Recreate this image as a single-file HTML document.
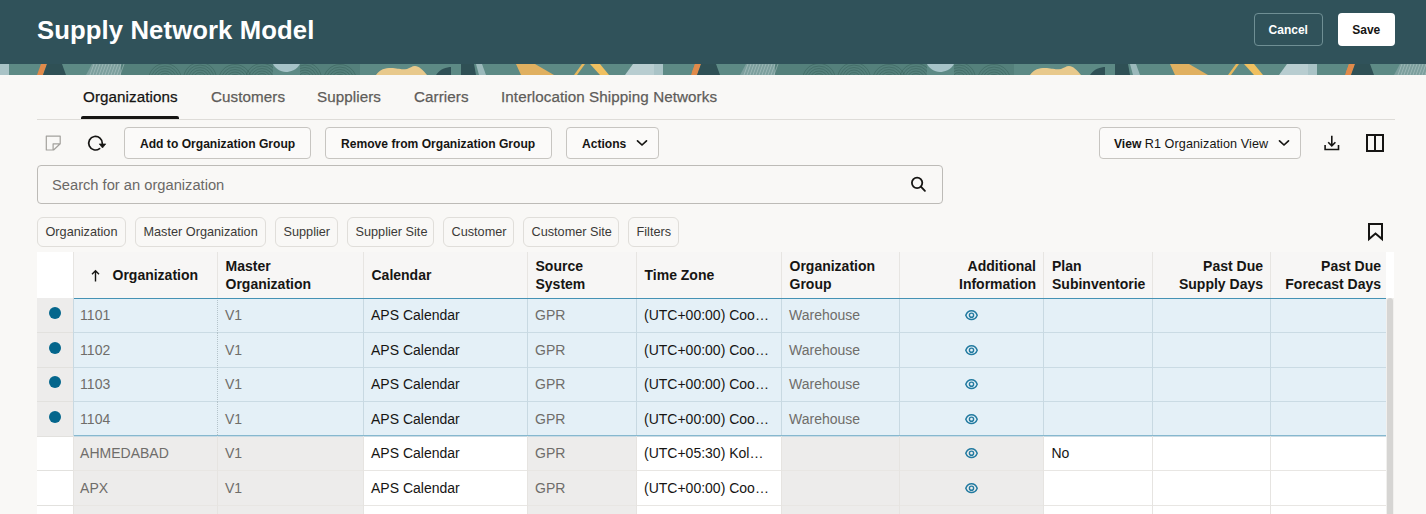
<!DOCTYPE html><html><head><meta charset="utf-8"><style>
*{box-sizing:border-box;margin:0;padding:0}
html,body{width:1426px;height:514px;overflow:hidden;background:#f9f8f6;font-family:"Liberation Sans",sans-serif;color:#161513}
.a{position:absolute;white-space:nowrap}
#hdr{position:absolute;left:0;top:0;width:1426px;height:64px;background:#30525a}
#title{left:37px;top:15.5px;letter-spacing:0.1px;font-size:25.7px;font-weight:bold;color:#fff}
.hbtn{position:absolute;top:13px;height:33px;border-radius:4px;font-size:13px;font-weight:bold;display:flex;align-items:center;justify-content:center}
#cancel{left:1253.5px;width:69.5px;font-size:12px;border:1px solid #6f8f94;color:#fff}
#save{left:1337.5px;width:57.5px;font-size:12px;background:#fff;color:#161513}
.tab{top:87.6px;font-size:15.2px;letter-spacing:0.08px;color:#5f5d5a;-webkit-text-stroke:0.25px #5f5d5a}
.btn{position:absolute;top:127px;height:32px;border:1px solid #c7c5c1;border-radius:4px;background:#fbfaf9;font-size:12.1px;font-weight:bold;white-space:nowrap;color:#161513}
.btn span{position:absolute;top:8.5px}
.chip{position:absolute;top:217px;height:30px;border:1px solid #e0deda;border-radius:6px;font-size:12.7px;white-space:nowrap;color:#3b3a37}
.chip span{position:absolute;top:7px}
.th{position:absolute;font-size:14px;font-weight:bold;line-height:18px;color:#161513;white-space:nowrap}
.td{position:absolute;font-size:14px;white-space:nowrap}
</style></head><body>
<div id="hdr"><div class="a" id="title">Supply Network Model</div><div class="hbtn" id="cancel">Cancel</div><div class="hbtn" id="save">Save</div></div>
<svg class="a" style="left:0;top:64px" width="1426" height="11" viewBox="0 0 1426 11"><defs><clipPath id="fpclip"><rect x="121" y="0" width="152" height="11"/><rect x="300" y="0" width="60" height="11"/></clipPath></defs><rect width="1426" height="11" fill="#5d8a85"/><g transform="translate(0,0)"><polygon points="0,0 12,0 9,11 0,11" fill="#a9c3c6"/><rect x="9" y="0" width="29" height="11" fill="#5d8a85"/><polygon points="41,0 47,0 43,11 37,11" fill="#e08a4a"/><polygon points="47,0 62,0 66,11 43,11" fill="#2f5055"/><rect x="66" y="0" width="20" height="11" fill="#5d8a85"/><polygon points="92,0 121,0 121,11 86,11" fill="#7c9f9d"/><rect x="121" y="0" width="152" height="11" fill="#54807b"/><path d="M273 0 H300 C297 6 290 8 286 8 C280 8 275 4 273 0 Z" fill="#a6c3c8"/><rect x="300" y="0" width="60" height="11" fill="#54807b"/><rect x="360" y="0" width="16" height="11" fill="#5d8a85"/><path d="M376 11 C380 5 385 4 391 4 C398 4 400 6 407 5 C410 4 412 2 415 2 C419 2 423 6 427 11 Z" fill="#e8c98c"/><rect x="428" y="0" width="8" height="11" fill="#5d8a85"/><path d="M436 11 C440 5 446 3 452 3 V11 Z" fill="#2f5055"/><rect x="451" y="0" width="10" height="11" fill="#5d8a85"/><polygon points="461,0 474,0 476,11 461,11" fill="#2f5055"/><polygon points="476,0 482,0 486,11 479,11" fill="#9bb9bb"/><rect x="486" y="0" width="30" height="11" fill="#5d8a85"/><polygon points="516,0 535,0 554,11 521,11" fill="#e0b060"/><rect x="554" y="0" width="21" height="11" fill="#5d8a85"/><polygon points="582,0 585,0 577,11 574,11" fill="#e8b85c"/><polygon points="590,0 600,0 609,11 600,11" fill="#f0c060"/><rect x="609" y="0" width="16" height="11" fill="#5d8a85"/><polygon points="633,0 660,0 663,11 625,11" fill="#b8cdd0"/><rect x="663" y="0" width="30" height="11" fill="#5d8a85"/><g clip-path="url(#fpclip)"><circle cx="165" cy="16" r="4" fill="none" stroke="#3b625e" stroke-width="0.8" opacity="0.7"/><circle cx="165" cy="16" r="6.5" fill="none" stroke="#3b625e" stroke-width="0.8" opacity="0.7"/><circle cx="165" cy="16" r="9" fill="none" stroke="#3b625e" stroke-width="0.8" opacity="0.7"/><circle cx="165" cy="16" r="11.5" fill="none" stroke="#3b625e" stroke-width="0.8" opacity="0.7"/><circle cx="165" cy="16" r="14" fill="none" stroke="#3b625e" stroke-width="0.8" opacity="0.7"/><circle cx="165" cy="16" r="16.5" fill="none" stroke="#3b625e" stroke-width="0.8" opacity="0.7"/><circle cx="200" cy="15" r="4" fill="none" stroke="#3b625e" stroke-width="0.8" opacity="0.7"/><circle cx="200" cy="15" r="6.5" fill="none" stroke="#3b625e" stroke-width="0.8" opacity="0.7"/><circle cx="200" cy="15" r="9" fill="none" stroke="#3b625e" stroke-width="0.8" opacity="0.7"/><circle cx="200" cy="15" r="11.5" fill="none" stroke="#3b625e" stroke-width="0.8" opacity="0.7"/><circle cx="200" cy="15" r="14" fill="none" stroke="#3b625e" stroke-width="0.8" opacity="0.7"/><circle cx="200" cy="15" r="16.5" fill="none" stroke="#3b625e" stroke-width="0.8" opacity="0.7"/><circle cx="235" cy="17" r="4" fill="none" stroke="#3b625e" stroke-width="0.8" opacity="0.7"/><circle cx="235" cy="17" r="6.5" fill="none" stroke="#3b625e" stroke-width="0.8" opacity="0.7"/><circle cx="235" cy="17" r="9" fill="none" stroke="#3b625e" stroke-width="0.8" opacity="0.7"/><circle cx="235" cy="17" r="11.5" fill="none" stroke="#3b625e" stroke-width="0.8" opacity="0.7"/><circle cx="235" cy="17" r="14" fill="none" stroke="#3b625e" stroke-width="0.8" opacity="0.7"/><circle cx="235" cy="17" r="16.5" fill="none" stroke="#3b625e" stroke-width="0.8" opacity="0.7"/><circle cx="262" cy="16" r="4" fill="none" stroke="#3b625e" stroke-width="0.8" opacity="0.7"/><circle cx="262" cy="16" r="6.5" fill="none" stroke="#3b625e" stroke-width="0.8" opacity="0.7"/><circle cx="262" cy="16" r="9" fill="none" stroke="#3b625e" stroke-width="0.8" opacity="0.7"/><circle cx="262" cy="16" r="11.5" fill="none" stroke="#3b625e" stroke-width="0.8" opacity="0.7"/><circle cx="262" cy="16" r="14" fill="none" stroke="#3b625e" stroke-width="0.8" opacity="0.7"/><circle cx="262" cy="16" r="16.5" fill="none" stroke="#3b625e" stroke-width="0.8" opacity="0.7"/><circle cx="305" cy="15" r="4" fill="none" stroke="#3b625e" stroke-width="0.8" opacity="0.7"/><circle cx="305" cy="15" r="6.5" fill="none" stroke="#3b625e" stroke-width="0.8" opacity="0.7"/><circle cx="305" cy="15" r="9" fill="none" stroke="#3b625e" stroke-width="0.8" opacity="0.7"/><circle cx="305" cy="15" r="11.5" fill="none" stroke="#3b625e" stroke-width="0.8" opacity="0.7"/><circle cx="305" cy="15" r="14" fill="none" stroke="#3b625e" stroke-width="0.8" opacity="0.7"/><circle cx="305" cy="15" r="16.5" fill="none" stroke="#3b625e" stroke-width="0.8" opacity="0.7"/><circle cx="340" cy="17" r="4" fill="none" stroke="#3b625e" stroke-width="0.8" opacity="0.7"/><circle cx="340" cy="17" r="6.5" fill="none" stroke="#3b625e" stroke-width="0.8" opacity="0.7"/><circle cx="340" cy="17" r="9" fill="none" stroke="#3b625e" stroke-width="0.8" opacity="0.7"/><circle cx="340" cy="17" r="11.5" fill="none" stroke="#3b625e" stroke-width="0.8" opacity="0.7"/><circle cx="340" cy="17" r="14" fill="none" stroke="#3b625e" stroke-width="0.8" opacity="0.7"/><circle cx="340" cy="17" r="16.5" fill="none" stroke="#3b625e" stroke-width="0.8" opacity="0.7"/></g><path d="M90 11 L94 0" stroke="#c9d8d8" stroke-width="0.7" opacity="0.6"/><path d="M93 11 L97 0" stroke="#c9d8d8" stroke-width="0.7" opacity="0.6"/><path d="M96 11 L100 0" stroke="#c9d8d8" stroke-width="0.7" opacity="0.6"/><path d="M99 11 L103 0" stroke="#c9d8d8" stroke-width="0.7" opacity="0.6"/><path d="M102 11 L106 0" stroke="#c9d8d8" stroke-width="0.7" opacity="0.6"/><path d="M105 11 L109 0" stroke="#c9d8d8" stroke-width="0.7" opacity="0.6"/><path d="M108 11 L112 0" stroke="#c9d8d8" stroke-width="0.7" opacity="0.6"/><path d="M111 11 L115 0" stroke="#c9d8d8" stroke-width="0.7" opacity="0.6"/><path d="M114 11 L118 0" stroke="#c9d8d8" stroke-width="0.7" opacity="0.6"/><path d="M117 11 L121 0" stroke="#c9d8d8" stroke-width="0.7" opacity="0.6"/><path d="M120 11 L124 0" stroke="#c9d8d8" stroke-width="0.7" opacity="0.6"/><polygon points="695,0 701,0 697,11 691,11" fill="#e08a4a"/></g><g transform="translate(654,0)"><polygon points="0,0 12,0 9,11 0,11" fill="#a9c3c6"/><rect x="9" y="0" width="29" height="11" fill="#5d8a85"/><polygon points="41,0 47,0 43,11 37,11" fill="#e08a4a"/><polygon points="47,0 62,0 66,11 43,11" fill="#2f5055"/><rect x="66" y="0" width="20" height="11" fill="#5d8a85"/><polygon points="92,0 121,0 121,11 86,11" fill="#7c9f9d"/><rect x="121" y="0" width="152" height="11" fill="#54807b"/><path d="M273 0 H300 C297 6 290 8 286 8 C280 8 275 4 273 0 Z" fill="#a6c3c8"/><rect x="300" y="0" width="60" height="11" fill="#54807b"/><rect x="360" y="0" width="16" height="11" fill="#5d8a85"/><path d="M376 11 C380 5 385 4 391 4 C398 4 400 6 407 5 C410 4 412 2 415 2 C419 2 423 6 427 11 Z" fill="#e8c98c"/><rect x="428" y="0" width="8" height="11" fill="#5d8a85"/><path d="M436 11 C440 5 446 3 452 3 V11 Z" fill="#2f5055"/><rect x="451" y="0" width="10" height="11" fill="#5d8a85"/><polygon points="461,0 474,0 476,11 461,11" fill="#2f5055"/><polygon points="476,0 482,0 486,11 479,11" fill="#9bb9bb"/><rect x="486" y="0" width="30" height="11" fill="#5d8a85"/><polygon points="516,0 535,0 554,11 521,11" fill="#e0b060"/><rect x="554" y="0" width="21" height="11" fill="#5d8a85"/><polygon points="582,0 585,0 577,11 574,11" fill="#e8b85c"/><polygon points="590,0 600,0 609,11 600,11" fill="#f0c060"/><rect x="609" y="0" width="16" height="11" fill="#5d8a85"/><polygon points="633,0 660,0 663,11 625,11" fill="#b8cdd0"/><rect x="663" y="0" width="30" height="11" fill="#5d8a85"/><g clip-path="url(#fpclip)"><circle cx="165" cy="16" r="4" fill="none" stroke="#3b625e" stroke-width="0.8" opacity="0.7"/><circle cx="165" cy="16" r="6.5" fill="none" stroke="#3b625e" stroke-width="0.8" opacity="0.7"/><circle cx="165" cy="16" r="9" fill="none" stroke="#3b625e" stroke-width="0.8" opacity="0.7"/><circle cx="165" cy="16" r="11.5" fill="none" stroke="#3b625e" stroke-width="0.8" opacity="0.7"/><circle cx="165" cy="16" r="14" fill="none" stroke="#3b625e" stroke-width="0.8" opacity="0.7"/><circle cx="165" cy="16" r="16.5" fill="none" stroke="#3b625e" stroke-width="0.8" opacity="0.7"/><circle cx="200" cy="15" r="4" fill="none" stroke="#3b625e" stroke-width="0.8" opacity="0.7"/><circle cx="200" cy="15" r="6.5" fill="none" stroke="#3b625e" stroke-width="0.8" opacity="0.7"/><circle cx="200" cy="15" r="9" fill="none" stroke="#3b625e" stroke-width="0.8" opacity="0.7"/><circle cx="200" cy="15" r="11.5" fill="none" stroke="#3b625e" stroke-width="0.8" opacity="0.7"/><circle cx="200" cy="15" r="14" fill="none" stroke="#3b625e" stroke-width="0.8" opacity="0.7"/><circle cx="200" cy="15" r="16.5" fill="none" stroke="#3b625e" stroke-width="0.8" opacity="0.7"/><circle cx="235" cy="17" r="4" fill="none" stroke="#3b625e" stroke-width="0.8" opacity="0.7"/><circle cx="235" cy="17" r="6.5" fill="none" stroke="#3b625e" stroke-width="0.8" opacity="0.7"/><circle cx="235" cy="17" r="9" fill="none" stroke="#3b625e" stroke-width="0.8" opacity="0.7"/><circle cx="235" cy="17" r="11.5" fill="none" stroke="#3b625e" stroke-width="0.8" opacity="0.7"/><circle cx="235" cy="17" r="14" fill="none" stroke="#3b625e" stroke-width="0.8" opacity="0.7"/><circle cx="235" cy="17" r="16.5" fill="none" stroke="#3b625e" stroke-width="0.8" opacity="0.7"/><circle cx="262" cy="16" r="4" fill="none" stroke="#3b625e" stroke-width="0.8" opacity="0.7"/><circle cx="262" cy="16" r="6.5" fill="none" stroke="#3b625e" stroke-width="0.8" opacity="0.7"/><circle cx="262" cy="16" r="9" fill="none" stroke="#3b625e" stroke-width="0.8" opacity="0.7"/><circle cx="262" cy="16" r="11.5" fill="none" stroke="#3b625e" stroke-width="0.8" opacity="0.7"/><circle cx="262" cy="16" r="14" fill="none" stroke="#3b625e" stroke-width="0.8" opacity="0.7"/><circle cx="262" cy="16" r="16.5" fill="none" stroke="#3b625e" stroke-width="0.8" opacity="0.7"/><circle cx="305" cy="15" r="4" fill="none" stroke="#3b625e" stroke-width="0.8" opacity="0.7"/><circle cx="305" cy="15" r="6.5" fill="none" stroke="#3b625e" stroke-width="0.8" opacity="0.7"/><circle cx="305" cy="15" r="9" fill="none" stroke="#3b625e" stroke-width="0.8" opacity="0.7"/><circle cx="305" cy="15" r="11.5" fill="none" stroke="#3b625e" stroke-width="0.8" opacity="0.7"/><circle cx="305" cy="15" r="14" fill="none" stroke="#3b625e" stroke-width="0.8" opacity="0.7"/><circle cx="305" cy="15" r="16.5" fill="none" stroke="#3b625e" stroke-width="0.8" opacity="0.7"/><circle cx="340" cy="17" r="4" fill="none" stroke="#3b625e" stroke-width="0.8" opacity="0.7"/><circle cx="340" cy="17" r="6.5" fill="none" stroke="#3b625e" stroke-width="0.8" opacity="0.7"/><circle cx="340" cy="17" r="9" fill="none" stroke="#3b625e" stroke-width="0.8" opacity="0.7"/><circle cx="340" cy="17" r="11.5" fill="none" stroke="#3b625e" stroke-width="0.8" opacity="0.7"/><circle cx="340" cy="17" r="14" fill="none" stroke="#3b625e" stroke-width="0.8" opacity="0.7"/><circle cx="340" cy="17" r="16.5" fill="none" stroke="#3b625e" stroke-width="0.8" opacity="0.7"/></g><path d="M90 11 L94 0" stroke="#c9d8d8" stroke-width="0.7" opacity="0.6"/><path d="M93 11 L97 0" stroke="#c9d8d8" stroke-width="0.7" opacity="0.6"/><path d="M96 11 L100 0" stroke="#c9d8d8" stroke-width="0.7" opacity="0.6"/><path d="M99 11 L103 0" stroke="#c9d8d8" stroke-width="0.7" opacity="0.6"/><path d="M102 11 L106 0" stroke="#c9d8d8" stroke-width="0.7" opacity="0.6"/><path d="M105 11 L109 0" stroke="#c9d8d8" stroke-width="0.7" opacity="0.6"/><path d="M108 11 L112 0" stroke="#c9d8d8" stroke-width="0.7" opacity="0.6"/><path d="M111 11 L115 0" stroke="#c9d8d8" stroke-width="0.7" opacity="0.6"/><path d="M114 11 L118 0" stroke="#c9d8d8" stroke-width="0.7" opacity="0.6"/><path d="M117 11 L121 0" stroke="#c9d8d8" stroke-width="0.7" opacity="0.6"/><path d="M120 11 L124 0" stroke="#c9d8d8" stroke-width="0.7" opacity="0.6"/><polygon points="695,0 701,0 697,11 691,11" fill="#e08a4a"/></g><g transform="translate(1308,0)"><polygon points="0,0 12,0 9,11 0,11" fill="#a9c3c6"/><rect x="9" y="0" width="29" height="11" fill="#5d8a85"/><polygon points="41,0 47,0 43,11 37,11" fill="#e08a4a"/><polygon points="47,0 62,0 66,11 43,11" fill="#2f5055"/><rect x="66" y="0" width="20" height="11" fill="#5d8a85"/><polygon points="92,0 121,0 121,11 86,11" fill="#7c9f9d"/><rect x="121" y="0" width="152" height="11" fill="#54807b"/><path d="M273 0 H300 C297 6 290 8 286 8 C280 8 275 4 273 0 Z" fill="#a6c3c8"/><rect x="300" y="0" width="60" height="11" fill="#54807b"/><rect x="360" y="0" width="16" height="11" fill="#5d8a85"/><path d="M376 11 C380 5 385 4 391 4 C398 4 400 6 407 5 C410 4 412 2 415 2 C419 2 423 6 427 11 Z" fill="#e8c98c"/><rect x="428" y="0" width="8" height="11" fill="#5d8a85"/><path d="M436 11 C440 5 446 3 452 3 V11 Z" fill="#2f5055"/><rect x="451" y="0" width="10" height="11" fill="#5d8a85"/><polygon points="461,0 474,0 476,11 461,11" fill="#2f5055"/><polygon points="476,0 482,0 486,11 479,11" fill="#9bb9bb"/><rect x="486" y="0" width="30" height="11" fill="#5d8a85"/><polygon points="516,0 535,0 554,11 521,11" fill="#e0b060"/><rect x="554" y="0" width="21" height="11" fill="#5d8a85"/><polygon points="582,0 585,0 577,11 574,11" fill="#e8b85c"/><polygon points="590,0 600,0 609,11 600,11" fill="#f0c060"/><rect x="609" y="0" width="16" height="11" fill="#5d8a85"/><polygon points="633,0 660,0 663,11 625,11" fill="#b8cdd0"/><rect x="663" y="0" width="30" height="11" fill="#5d8a85"/><g clip-path="url(#fpclip)"><circle cx="165" cy="16" r="4" fill="none" stroke="#3b625e" stroke-width="0.8" opacity="0.7"/><circle cx="165" cy="16" r="6.5" fill="none" stroke="#3b625e" stroke-width="0.8" opacity="0.7"/><circle cx="165" cy="16" r="9" fill="none" stroke="#3b625e" stroke-width="0.8" opacity="0.7"/><circle cx="165" cy="16" r="11.5" fill="none" stroke="#3b625e" stroke-width="0.8" opacity="0.7"/><circle cx="165" cy="16" r="14" fill="none" stroke="#3b625e" stroke-width="0.8" opacity="0.7"/><circle cx="165" cy="16" r="16.5" fill="none" stroke="#3b625e" stroke-width="0.8" opacity="0.7"/><circle cx="200" cy="15" r="4" fill="none" stroke="#3b625e" stroke-width="0.8" opacity="0.7"/><circle cx="200" cy="15" r="6.5" fill="none" stroke="#3b625e" stroke-width="0.8" opacity="0.7"/><circle cx="200" cy="15" r="9" fill="none" stroke="#3b625e" stroke-width="0.8" opacity="0.7"/><circle cx="200" cy="15" r="11.5" fill="none" stroke="#3b625e" stroke-width="0.8" opacity="0.7"/><circle cx="200" cy="15" r="14" fill="none" stroke="#3b625e" stroke-width="0.8" opacity="0.7"/><circle cx="200" cy="15" r="16.5" fill="none" stroke="#3b625e" stroke-width="0.8" opacity="0.7"/><circle cx="235" cy="17" r="4" fill="none" stroke="#3b625e" stroke-width="0.8" opacity="0.7"/><circle cx="235" cy="17" r="6.5" fill="none" stroke="#3b625e" stroke-width="0.8" opacity="0.7"/><circle cx="235" cy="17" r="9" fill="none" stroke="#3b625e" stroke-width="0.8" opacity="0.7"/><circle cx="235" cy="17" r="11.5" fill="none" stroke="#3b625e" stroke-width="0.8" opacity="0.7"/><circle cx="235" cy="17" r="14" fill="none" stroke="#3b625e" stroke-width="0.8" opacity="0.7"/><circle cx="235" cy="17" r="16.5" fill="none" stroke="#3b625e" stroke-width="0.8" opacity="0.7"/><circle cx="262" cy="16" r="4" fill="none" stroke="#3b625e" stroke-width="0.8" opacity="0.7"/><circle cx="262" cy="16" r="6.5" fill="none" stroke="#3b625e" stroke-width="0.8" opacity="0.7"/><circle cx="262" cy="16" r="9" fill="none" stroke="#3b625e" stroke-width="0.8" opacity="0.7"/><circle cx="262" cy="16" r="11.5" fill="none" stroke="#3b625e" stroke-width="0.8" opacity="0.7"/><circle cx="262" cy="16" r="14" fill="none" stroke="#3b625e" stroke-width="0.8" opacity="0.7"/><circle cx="262" cy="16" r="16.5" fill="none" stroke="#3b625e" stroke-width="0.8" opacity="0.7"/><circle cx="305" cy="15" r="4" fill="none" stroke="#3b625e" stroke-width="0.8" opacity="0.7"/><circle cx="305" cy="15" r="6.5" fill="none" stroke="#3b625e" stroke-width="0.8" opacity="0.7"/><circle cx="305" cy="15" r="9" fill="none" stroke="#3b625e" stroke-width="0.8" opacity="0.7"/><circle cx="305" cy="15" r="11.5" fill="none" stroke="#3b625e" stroke-width="0.8" opacity="0.7"/><circle cx="305" cy="15" r="14" fill="none" stroke="#3b625e" stroke-width="0.8" opacity="0.7"/><circle cx="305" cy="15" r="16.5" fill="none" stroke="#3b625e" stroke-width="0.8" opacity="0.7"/><circle cx="340" cy="17" r="4" fill="none" stroke="#3b625e" stroke-width="0.8" opacity="0.7"/><circle cx="340" cy="17" r="6.5" fill="none" stroke="#3b625e" stroke-width="0.8" opacity="0.7"/><circle cx="340" cy="17" r="9" fill="none" stroke="#3b625e" stroke-width="0.8" opacity="0.7"/><circle cx="340" cy="17" r="11.5" fill="none" stroke="#3b625e" stroke-width="0.8" opacity="0.7"/><circle cx="340" cy="17" r="14" fill="none" stroke="#3b625e" stroke-width="0.8" opacity="0.7"/><circle cx="340" cy="17" r="16.5" fill="none" stroke="#3b625e" stroke-width="0.8" opacity="0.7"/></g><path d="M90 11 L94 0" stroke="#c9d8d8" stroke-width="0.7" opacity="0.6"/><path d="M93 11 L97 0" stroke="#c9d8d8" stroke-width="0.7" opacity="0.6"/><path d="M96 11 L100 0" stroke="#c9d8d8" stroke-width="0.7" opacity="0.6"/><path d="M99 11 L103 0" stroke="#c9d8d8" stroke-width="0.7" opacity="0.6"/><path d="M102 11 L106 0" stroke="#c9d8d8" stroke-width="0.7" opacity="0.6"/><path d="M105 11 L109 0" stroke="#c9d8d8" stroke-width="0.7" opacity="0.6"/><path d="M108 11 L112 0" stroke="#c9d8d8" stroke-width="0.7" opacity="0.6"/><path d="M111 11 L115 0" stroke="#c9d8d8" stroke-width="0.7" opacity="0.6"/><path d="M114 11 L118 0" stroke="#c9d8d8" stroke-width="0.7" opacity="0.6"/><path d="M117 11 L121 0" stroke="#c9d8d8" stroke-width="0.7" opacity="0.6"/><path d="M120 11 L124 0" stroke="#c9d8d8" stroke-width="0.7" opacity="0.6"/><polygon points="695,0 701,0 697,11 691,11" fill="#e08a4a"/></g></svg>
<div class="a tab" style="left:83px;color:#161513;-webkit-text-stroke:0.25px #161513">Organizations</div>
<div class="a tab" style="left:211px">Customers</div>
<div class="a tab" style="left:317px">Suppliers</div>
<div class="a tab" style="left:414px">Carriers</div>
<div class="a tab" style="left:501px">Interlocation Shipping Networks</div>
<div class="a" style="left:37px;top:119px;width:1358px;height:1px;background:#dedcd8"></div>
<div class="a" style="left:81px;top:116px;width:98px;height:3px;background:#161513;border-radius:2px 2px 0 0"></div>
<svg class="a" style="left:44px;top:134px" width="19" height="18" viewBox="0 0 19 18"><path d="M2.3 2.1 H16.2 V9.8 L9.6 16 H2.3 Z M16.2 9.8 H9.1 V16" fill="none" stroke="#a3a19d" stroke-width="1.2" stroke-linejoin="round"/></svg>
<svg class="a" style="left:86px;top:134px" width="21" height="18" viewBox="0 0 21 18"><path d="M16.3 9.5 A6.8 6.8 0 1 0 13.6 14.6" fill="none" stroke="#161513" stroke-width="1.7" stroke-linecap="round"/><path d="M13.2 9.9 H19.8 L16.5 14 Z" fill="#161513" stroke="#161513" stroke-width="0.6" stroke-linejoin="round"/></svg>
<div class="btn" style="left:124px;width:187px"><span style="left:15px">Add to Organization Group</span></div>
<div class="btn" style="left:325px;width:227px"><span style="left:15px">Remove from Organization Group</span></div>
<div class="btn" style="left:566px;width:93px"><span style="left:15px">Actions</span></div>
<svg class="a" style="left:636px;top:139px" width="12" height="8" viewBox="0 0 12 8"><path d="M1.5 1.8 L6 6 L10.5 1.8" fill="none" stroke="#161513" stroke-width="1.7" stroke-linecap="round" stroke-linejoin="round"/></svg>
<div class="btn" style="left:1099px;width:202px"><span style="left:14px">View <span style="position:static;font-weight:normal;font-size:12.6px;letter-spacing:0.1px">R1 Organization View</span></span></div>
<svg class="a" style="left:1278px;top:139px" width="12" height="8" viewBox="0 0 12 8"><path d="M1.5 1.8 L6 6 L10.5 1.8" fill="none" stroke="#161513" stroke-width="1.7" stroke-linecap="round" stroke-linejoin="round"/></svg>
<svg class="a" style="left:1322px;top:134px" width="19" height="18" viewBox="0 0 19 18"><path d="M9.8 1.8 V11.6 M6.2 8.2 L9.8 11.8 L13.4 8.2 M3.1 11 V15.5 H16.5 V11" fill="none" stroke="#161513" stroke-width="1.6"/></svg>
<svg class="a" style="left:1366px;top:134px" width="18" height="18" viewBox="0 0 18 18"><rect x="1" y="1" width="16" height="16" fill="none" stroke="#161513" stroke-width="2"/><path d="M9 1 V17" stroke="#161513" stroke-width="2"/></svg>
<div class="a" style="left:37px;top:165px;width:906px;height:39px;border:1px solid #bdbbb7;border-radius:4px"></div>
<div class="a" style="left:52px;top:177px;font-size:14.7px;color:#6b6966">Search for an organization</div>
<svg class="a" style="left:909px;top:175px" width="19" height="19" viewBox="0 0 19 19"><circle cx="8.1" cy="7.85" r="5.2" fill="none" stroke="#161513" stroke-width="1.8"/><path d="M11.9 11.7 L15.9 15.8" stroke="#161513" stroke-width="1.9" stroke-linecap="round"/></svg>
<div class="chip" style="left:37px;width:89px"><span style="left:7.5px">Organization</span></div>
<div class="chip" style="left:135px;width:131px"><span style="left:7.5px">Master Organization</span></div>
<div class="chip" style="left:275px;width:63px"><span style="left:7.5px">Supplier</span></div>
<div class="chip" style="left:347px;width:87px"><span style="left:7.5px">Supplier Site</span></div>
<div class="chip" style="left:443px;width:71px"><span style="left:7.5px">Customer</span></div>
<div class="chip" style="left:523px;width:96px"><span style="left:7.5px">Customer Site</span></div>
<div class="chip" style="left:628px;width:51px"><span style="left:7.5px">Filters</span></div>
<svg class="a" style="left:1366px;top:221px" width="19" height="21" viewBox="0 0 19 21"><path d="M3 3 H16 V18 L9.5 12.5 L3 18 Z" fill="none" stroke="#161513" stroke-width="2" stroke-linejoin="miter"/></svg>
<div class="a" style="left:37px;top:252px;width:36.5px;height:46px;background:#fff"></div>
<div class="a" style="left:73.5px;top:252px;width:1312.0px;height:46px;background:#f7f6f5"></div>
<div class="a" style="left:1385.5px;top:252px;width:8.5px;height:46px;background:#fff"></div>
<div class="a" style="left:1385.5px;top:298px;width:8.5px;height:216px;background:#f1f0ee"></div>
<div class="a" style="left:1387px;top:298px;width:6px;height:216px;background:#d6d5d3;border-radius:3px 3px 0 0"></div>
<div class="a" style="left:73.0px;top:252px;width:1px;height:46px;background:#e7e5e2"></div>
<div class="a" style="left:216.5px;top:252px;width:1px;height:46px;background:#e7e5e2"></div>
<div class="a" style="left:362.5px;top:252px;width:1px;height:46px;background:#e7e5e2"></div>
<div class="a" style="left:526.5px;top:252px;width:1px;height:46px;background:#e7e5e2"></div>
<div class="a" style="left:635.5px;top:252px;width:1px;height:46px;background:#e7e5e2"></div>
<div class="a" style="left:780.5px;top:252px;width:1px;height:46px;background:#e7e5e2"></div>
<div class="a" style="left:899.0px;top:252px;width:1px;height:46px;background:#e7e5e2"></div>
<div class="a" style="left:1043.0px;top:252px;width:1px;height:46px;background:#e7e5e2"></div>
<div class="a" style="left:1152.0px;top:252px;width:1px;height:46px;background:#e7e5e2"></div>
<div class="a" style="left:1270.0px;top:252px;width:1px;height:46px;background:#e7e5e2"></div>
<div class="th" style="left:112.5px;top:265.6px">Organization</div>
<div class="th" style="left:225.5px;top:256.8px">Master<br>Organization</div>
<div class="th" style="left:371.5px;top:265.6px">Calendar</div>
<div class="th" style="left:535.5px;top:256.8px">Source<br>System</div>
<div class="th" style="left:644.5px;top:265.6px">Time Zone</div>
<div class="th" style="left:789.5px;top:256.8px">Organization<br>Group</div>
<div class="th" style="right:390.0px;top:256.8px;text-align:right">Additional<br>Information</div>
<div class="th" style="left:1052.0px;top:256.8px">Plan<br>Subinventorie</div>
<div class="th" style="right:163.0px;top:256.8px;text-align:right">Past Due<br>Supply Days</div>
<div class="th" style="right:45.0px;top:256.8px;text-align:right">Past Due<br>Forecast Days</div>
<svg class="a" style="left:90px;top:269px" width="11" height="13" viewBox="0 0 11 13"><path d="M5.5 12.5 V1.8 M2 5.3 L5.5 1.8 L9 5.3" fill="none" stroke="#161513" stroke-width="1.4"/></svg>
<div class="a" style="left:37px;top:298.0px;width:36.5px;height:34.5px;background:#edeceb"></div>
<div class="a" style="left:73.5px;top:298.0px;width:1312.0px;height:34.5px;background:#e4f0f7"></div>
<div class="a" style="left:37px;top:332.5px;width:36.5px;height:34.5px;background:#edeceb"></div>
<div class="a" style="left:73.5px;top:332.5px;width:1312.0px;height:34.5px;background:#e4f0f7"></div>
<div class="a" style="left:37px;top:367.0px;width:36.5px;height:34.5px;background:#edeceb"></div>
<div class="a" style="left:73.5px;top:367.0px;width:1312.0px;height:34.5px;background:#e4f0f7"></div>
<div class="a" style="left:37px;top:401.5px;width:36.5px;height:34.5px;background:#edeceb"></div>
<div class="a" style="left:73.5px;top:401.5px;width:1312.0px;height:34.5px;background:#e4f0f7"></div>
<div class="a" style="left:37px;top:436.0px;width:1348.5px;height:34.5px;background:#fff"></div>
<div class="a" style="left:73.5px;top:436.0px;width:143.5px;height:34.5px;background:#edeceb"></div>
<div class="a" style="left:217px;top:436.0px;width:146px;height:34.5px;background:#edeceb"></div>
<div class="a" style="left:527px;top:436.0px;width:109px;height:34.5px;background:#edeceb"></div>
<div class="a" style="left:781px;top:436.0px;width:118.5px;height:34.5px;background:#edeceb"></div>
<div class="a" style="left:899.5px;top:436.0px;width:144.0px;height:34.5px;background:#edeceb"></div>
<div class="a" style="left:37px;top:470.5px;width:1348.5px;height:34.5px;background:#fff"></div>
<div class="a" style="left:73.5px;top:470.5px;width:143.5px;height:34.5px;background:#edeceb"></div>
<div class="a" style="left:217px;top:470.5px;width:146px;height:34.5px;background:#edeceb"></div>
<div class="a" style="left:527px;top:470.5px;width:109px;height:34.5px;background:#edeceb"></div>
<div class="a" style="left:781px;top:470.5px;width:118.5px;height:34.5px;background:#edeceb"></div>
<div class="a" style="left:899.5px;top:470.5px;width:144.0px;height:34.5px;background:#edeceb"></div>
<div class="a" style="left:37px;top:505.0px;width:1348.5px;height:9.0px;background:#fff"></div>
<div class="a" style="left:73.5px;top:505.0px;width:143.5px;height:9.0px;background:#edeceb"></div>
<div class="a" style="left:217px;top:505.0px;width:146px;height:9.0px;background:#edeceb"></div>
<div class="a" style="left:527px;top:505.0px;width:109px;height:9.0px;background:#edeceb"></div>
<div class="a" style="left:781px;top:505.0px;width:118.5px;height:9.0px;background:#edeceb"></div>
<div class="a" style="left:899.5px;top:505.0px;width:144.0px;height:9.0px;background:#edeceb"></div>
<div class="a" style="left:73.5px;top:332.0px;width:1312.0px;height:1px;background:#cadbe4"></div>
<div class="a" style="left:37px;top:332.0px;width:36.5px;height:1px;background:#e2e1de"></div>
<div class="a" style="left:73.0px;top:298.0px;width:1px;height:34.5px;background:#c8d9e2"></div>
<div class="a" style="left:216.5px;top:298.0px;width:1px;height:34.5px;background:repeating-linear-gradient(to bottom,#b4c3ca 0 1px,transparent 1px 2px)"></div>
<div class="a" style="left:362.5px;top:298.0px;width:1px;height:34.5px;background:#c8d9e2"></div>
<div class="a" style="left:526.5px;top:298.0px;width:1px;height:34.5px;background:#c8d9e2"></div>
<div class="a" style="left:635.5px;top:298.0px;width:1px;height:34.5px;background:#c8d9e2"></div>
<div class="a" style="left:780.5px;top:298.0px;width:1px;height:34.5px;background:#c8d9e2"></div>
<div class="a" style="left:899.0px;top:298.0px;width:1px;height:34.5px;background:#c8d9e2"></div>
<div class="a" style="left:1043.0px;top:298.0px;width:1px;height:34.5px;background:#c8d9e2"></div>
<div class="a" style="left:1152.0px;top:298.0px;width:1px;height:34.5px;background:#c8d9e2"></div>
<div class="a" style="left:1270.0px;top:298.0px;width:1px;height:34.5px;background:#c8d9e2"></div>
<div class="a" style="left:73.5px;top:366.5px;width:1312.0px;height:1px;background:#cadbe4"></div>
<div class="a" style="left:37px;top:366.5px;width:36.5px;height:1px;background:#e2e1de"></div>
<div class="a" style="left:73.0px;top:332.5px;width:1px;height:34.5px;background:#c8d9e2"></div>
<div class="a" style="left:216.5px;top:332.5px;width:1px;height:34.5px;background:repeating-linear-gradient(to bottom,#b4c3ca 0 1px,transparent 1px 2px)"></div>
<div class="a" style="left:362.5px;top:332.5px;width:1px;height:34.5px;background:#c8d9e2"></div>
<div class="a" style="left:526.5px;top:332.5px;width:1px;height:34.5px;background:#c8d9e2"></div>
<div class="a" style="left:635.5px;top:332.5px;width:1px;height:34.5px;background:#c8d9e2"></div>
<div class="a" style="left:780.5px;top:332.5px;width:1px;height:34.5px;background:#c8d9e2"></div>
<div class="a" style="left:899.0px;top:332.5px;width:1px;height:34.5px;background:#c8d9e2"></div>
<div class="a" style="left:1043.0px;top:332.5px;width:1px;height:34.5px;background:#c8d9e2"></div>
<div class="a" style="left:1152.0px;top:332.5px;width:1px;height:34.5px;background:#c8d9e2"></div>
<div class="a" style="left:1270.0px;top:332.5px;width:1px;height:34.5px;background:#c8d9e2"></div>
<div class="a" style="left:73.5px;top:401.0px;width:1312.0px;height:1px;background:#cadbe4"></div>
<div class="a" style="left:37px;top:401.0px;width:36.5px;height:1px;background:#e2e1de"></div>
<div class="a" style="left:73.0px;top:367.0px;width:1px;height:34.5px;background:#c8d9e2"></div>
<div class="a" style="left:216.5px;top:367.0px;width:1px;height:34.5px;background:repeating-linear-gradient(to bottom,#b4c3ca 0 1px,transparent 1px 2px)"></div>
<div class="a" style="left:362.5px;top:367.0px;width:1px;height:34.5px;background:#c8d9e2"></div>
<div class="a" style="left:526.5px;top:367.0px;width:1px;height:34.5px;background:#c8d9e2"></div>
<div class="a" style="left:635.5px;top:367.0px;width:1px;height:34.5px;background:#c8d9e2"></div>
<div class="a" style="left:780.5px;top:367.0px;width:1px;height:34.5px;background:#c8d9e2"></div>
<div class="a" style="left:899.0px;top:367.0px;width:1px;height:34.5px;background:#c8d9e2"></div>
<div class="a" style="left:1043.0px;top:367.0px;width:1px;height:34.5px;background:#c8d9e2"></div>
<div class="a" style="left:1152.0px;top:367.0px;width:1px;height:34.5px;background:#c8d9e2"></div>
<div class="a" style="left:1270.0px;top:367.0px;width:1px;height:34.5px;background:#c8d9e2"></div>
<div class="a" style="left:73.5px;top:435.5px;width:1312.0px;height:1px;background:#cadbe4"></div>
<div class="a" style="left:37px;top:435.5px;width:36.5px;height:1px;background:#e2e1de"></div>
<div class="a" style="left:73.0px;top:401.5px;width:1px;height:34.5px;background:#c8d9e2"></div>
<div class="a" style="left:216.5px;top:401.5px;width:1px;height:34.5px;background:repeating-linear-gradient(to bottom,#b4c3ca 0 1px,transparent 1px 2px)"></div>
<div class="a" style="left:362.5px;top:401.5px;width:1px;height:34.5px;background:#c8d9e2"></div>
<div class="a" style="left:526.5px;top:401.5px;width:1px;height:34.5px;background:#c8d9e2"></div>
<div class="a" style="left:635.5px;top:401.5px;width:1px;height:34.5px;background:#c8d9e2"></div>
<div class="a" style="left:780.5px;top:401.5px;width:1px;height:34.5px;background:#c8d9e2"></div>
<div class="a" style="left:899.0px;top:401.5px;width:1px;height:34.5px;background:#c8d9e2"></div>
<div class="a" style="left:1043.0px;top:401.5px;width:1px;height:34.5px;background:#c8d9e2"></div>
<div class="a" style="left:1152.0px;top:401.5px;width:1px;height:34.5px;background:#c8d9e2"></div>
<div class="a" style="left:1270.0px;top:401.5px;width:1px;height:34.5px;background:#c8d9e2"></div>
<div class="a" style="left:73.5px;top:470.0px;width:1312.0px;height:1px;background:#e8e6e3"></div>
<div class="a" style="left:37px;top:470.0px;width:36.5px;height:1px;background:#e2e1de"></div>
<div class="a" style="left:73.0px;top:436.0px;width:1px;height:34.5px;background:#e6e4e1"></div>
<div class="a" style="left:216.5px;top:436.0px;width:1px;height:34.5px;background:#e6e4e1"></div>
<div class="a" style="left:362.5px;top:436.0px;width:1px;height:34.5px;background:#e6e4e1"></div>
<div class="a" style="left:526.5px;top:436.0px;width:1px;height:34.5px;background:#e6e4e1"></div>
<div class="a" style="left:635.5px;top:436.0px;width:1px;height:34.5px;background:#e6e4e1"></div>
<div class="a" style="left:780.5px;top:436.0px;width:1px;height:34.5px;background:#e6e4e1"></div>
<div class="a" style="left:899.0px;top:436.0px;width:1px;height:34.5px;background:#e6e4e1"></div>
<div class="a" style="left:1043.0px;top:436.0px;width:1px;height:34.5px;background:#e6e4e1"></div>
<div class="a" style="left:1152.0px;top:436.0px;width:1px;height:34.5px;background:#e6e4e1"></div>
<div class="a" style="left:1270.0px;top:436.0px;width:1px;height:34.5px;background:#e6e4e1"></div>
<div class="a" style="left:73.5px;top:504.5px;width:1312.0px;height:1px;background:#e8e6e3"></div>
<div class="a" style="left:37px;top:504.5px;width:36.5px;height:1px;background:#e2e1de"></div>
<div class="a" style="left:73.0px;top:470.5px;width:1px;height:34.5px;background:#e6e4e1"></div>
<div class="a" style="left:216.5px;top:470.5px;width:1px;height:34.5px;background:#e6e4e1"></div>
<div class="a" style="left:362.5px;top:470.5px;width:1px;height:34.5px;background:#e6e4e1"></div>
<div class="a" style="left:526.5px;top:470.5px;width:1px;height:34.5px;background:#e6e4e1"></div>
<div class="a" style="left:635.5px;top:470.5px;width:1px;height:34.5px;background:#e6e4e1"></div>
<div class="a" style="left:780.5px;top:470.5px;width:1px;height:34.5px;background:#e6e4e1"></div>
<div class="a" style="left:899.0px;top:470.5px;width:1px;height:34.5px;background:#e6e4e1"></div>
<div class="a" style="left:1043.0px;top:470.5px;width:1px;height:34.5px;background:#e6e4e1"></div>
<div class="a" style="left:1152.0px;top:470.5px;width:1px;height:34.5px;background:#e6e4e1"></div>
<div class="a" style="left:1270.0px;top:470.5px;width:1px;height:34.5px;background:#e6e4e1"></div>
<div class="a" style="left:73.0px;top:505.0px;width:1px;height:9.0px;background:#e6e4e1"></div>
<div class="a" style="left:216.5px;top:505.0px;width:1px;height:9.0px;background:#e6e4e1"></div>
<div class="a" style="left:362.5px;top:505.0px;width:1px;height:9.0px;background:#e6e4e1"></div>
<div class="a" style="left:526.5px;top:505.0px;width:1px;height:9.0px;background:#e6e4e1"></div>
<div class="a" style="left:635.5px;top:505.0px;width:1px;height:9.0px;background:#e6e4e1"></div>
<div class="a" style="left:780.5px;top:505.0px;width:1px;height:9.0px;background:#e6e4e1"></div>
<div class="a" style="left:899.0px;top:505.0px;width:1px;height:9.0px;background:#e6e4e1"></div>
<div class="a" style="left:1043.0px;top:505.0px;width:1px;height:9.0px;background:#e6e4e1"></div>
<div class="a" style="left:1152.0px;top:505.0px;width:1px;height:9.0px;background:#e6e4e1"></div>
<div class="a" style="left:1270.0px;top:505.0px;width:1px;height:9.0px;background:#e6e4e1"></div>
<div class="a" style="left:49.3px;top:307.0px;width:12px;height:12px;border-radius:50%;background:#04668c"></div>
<div class="td" style="left:80.1px;top:307.4px;color:#6f6d6a">1101</div>
<div class="td" style="left:225px;top:307.4px;color:#6f6d6a">V1</div>
<div class="td" style="left:371px;top:307.4px;color:#161513">APS Calendar</div>
<div class="td" style="left:535px;top:307.4px;color:#6f6d6a">GPR</div>
<div class="td" style="left:644px;top:307.4px;color:#161513">(UTC+00:00) Coo…</div>
<div class="td" style="left:789px;top:307.4px;color:#6f6d6a">Warehouse</div>
<div class="a" style="left:965.4px;top:310.0px;line-height:0"><svg width="13" height="11" viewBox="0 0 13 11"><path d="M0.8 5.2 C3 -0.6 10 -0.6 12.2 5.2 C10 11 3 11 0.8 5.2 Z" fill="none" stroke="#227aa0" stroke-width="1.5"/><circle cx="6.5" cy="5.2" r="2.1" fill="none" stroke="#227aa0" stroke-width="1.4"/></svg></div>
<div class="a" style="left:49.3px;top:341.5px;width:12px;height:12px;border-radius:50%;background:#04668c"></div>
<div class="td" style="left:80.1px;top:341.9px;color:#6f6d6a">1102</div>
<div class="td" style="left:225px;top:341.9px;color:#6f6d6a">V1</div>
<div class="td" style="left:371px;top:341.9px;color:#161513">APS Calendar</div>
<div class="td" style="left:535px;top:341.9px;color:#6f6d6a">GPR</div>
<div class="td" style="left:644px;top:341.9px;color:#161513">(UTC+00:00) Coo…</div>
<div class="td" style="left:789px;top:341.9px;color:#6f6d6a">Warehouse</div>
<div class="a" style="left:965.4px;top:344.5px;line-height:0"><svg width="13" height="11" viewBox="0 0 13 11"><path d="M0.8 5.2 C3 -0.6 10 -0.6 12.2 5.2 C10 11 3 11 0.8 5.2 Z" fill="none" stroke="#227aa0" stroke-width="1.5"/><circle cx="6.5" cy="5.2" r="2.1" fill="none" stroke="#227aa0" stroke-width="1.4"/></svg></div>
<div class="a" style="left:49.3px;top:376.0px;width:12px;height:12px;border-radius:50%;background:#04668c"></div>
<div class="td" style="left:80.1px;top:376.4px;color:#6f6d6a">1103</div>
<div class="td" style="left:225px;top:376.4px;color:#6f6d6a">V1</div>
<div class="td" style="left:371px;top:376.4px;color:#161513">APS Calendar</div>
<div class="td" style="left:535px;top:376.4px;color:#6f6d6a">GPR</div>
<div class="td" style="left:644px;top:376.4px;color:#161513">(UTC+00:00) Coo…</div>
<div class="td" style="left:789px;top:376.4px;color:#6f6d6a">Warehouse</div>
<div class="a" style="left:965.4px;top:379.0px;line-height:0"><svg width="13" height="11" viewBox="0 0 13 11"><path d="M0.8 5.2 C3 -0.6 10 -0.6 12.2 5.2 C10 11 3 11 0.8 5.2 Z" fill="none" stroke="#227aa0" stroke-width="1.5"/><circle cx="6.5" cy="5.2" r="2.1" fill="none" stroke="#227aa0" stroke-width="1.4"/></svg></div>
<div class="a" style="left:49.3px;top:410.5px;width:12px;height:12px;border-radius:50%;background:#04668c"></div>
<div class="td" style="left:80.1px;top:410.9px;color:#6f6d6a">1104</div>
<div class="td" style="left:225px;top:410.9px;color:#6f6d6a">V1</div>
<div class="td" style="left:371px;top:410.9px;color:#161513">APS Calendar</div>
<div class="td" style="left:535px;top:410.9px;color:#6f6d6a">GPR</div>
<div class="td" style="left:644px;top:410.9px;color:#161513">(UTC+00:00) Coo…</div>
<div class="td" style="left:789px;top:410.9px;color:#6f6d6a">Warehouse</div>
<div class="a" style="left:965.4px;top:413.5px;line-height:0"><svg width="13" height="11" viewBox="0 0 13 11"><path d="M0.8 5.2 C3 -0.6 10 -0.6 12.2 5.2 C10 11 3 11 0.8 5.2 Z" fill="none" stroke="#227aa0" stroke-width="1.5"/><circle cx="6.5" cy="5.2" r="2.1" fill="none" stroke="#227aa0" stroke-width="1.4"/></svg></div>
<div class="td" style="left:80.1px;top:445.4px;color:#6f6d6a">AHMEDABAD</div>
<div class="td" style="left:225px;top:445.4px;color:#6f6d6a">V1</div>
<div class="td" style="left:371px;top:445.4px;color:#161513">APS Calendar</div>
<div class="td" style="left:535px;top:445.4px;color:#6f6d6a">GPR</div>
<div class="td" style="left:644px;top:445.4px;color:#161513">(UTC+05:30) Kol…</div>
<div class="td" style="left:1051.5px;top:445.4px;color:#161513">No</div>
<div class="a" style="left:965.4px;top:448.0px;line-height:0"><svg width="13" height="11" viewBox="0 0 13 11"><path d="M0.8 5.2 C3 -0.6 10 -0.6 12.2 5.2 C10 11 3 11 0.8 5.2 Z" fill="none" stroke="#227aa0" stroke-width="1.5"/><circle cx="6.5" cy="5.2" r="2.1" fill="none" stroke="#227aa0" stroke-width="1.4"/></svg></div>
<div class="td" style="left:80.1px;top:479.9px;color:#6f6d6a">APX</div>
<div class="td" style="left:225px;top:479.9px;color:#6f6d6a">V1</div>
<div class="td" style="left:371px;top:479.9px;color:#161513">APS Calendar</div>
<div class="td" style="left:535px;top:479.9px;color:#6f6d6a">GPR</div>
<div class="td" style="left:644px;top:479.9px;color:#161513">(UTC+00:00) Coo…</div>
<div class="a" style="left:965.4px;top:482.5px;line-height:0"><svg width="13" height="11" viewBox="0 0 13 11"><path d="M0.8 5.2 C3 -0.6 10 -0.6 12.2 5.2 C10 11 3 11 0.8 5.2 Z" fill="none" stroke="#227aa0" stroke-width="1.5"/><circle cx="6.5" cy="5.2" r="2.1" fill="none" stroke="#227aa0" stroke-width="1.4"/></svg></div>
<div class="a" style="left:73.5px;top:297.8px;width:1312.0px;height:1.3px;background:#4592b4"></div>
<div class="a" style="left:73.5px;top:435.0px;width:1312.0px;height:1.3px;background:#86b8cf"></div>
</body></html>
